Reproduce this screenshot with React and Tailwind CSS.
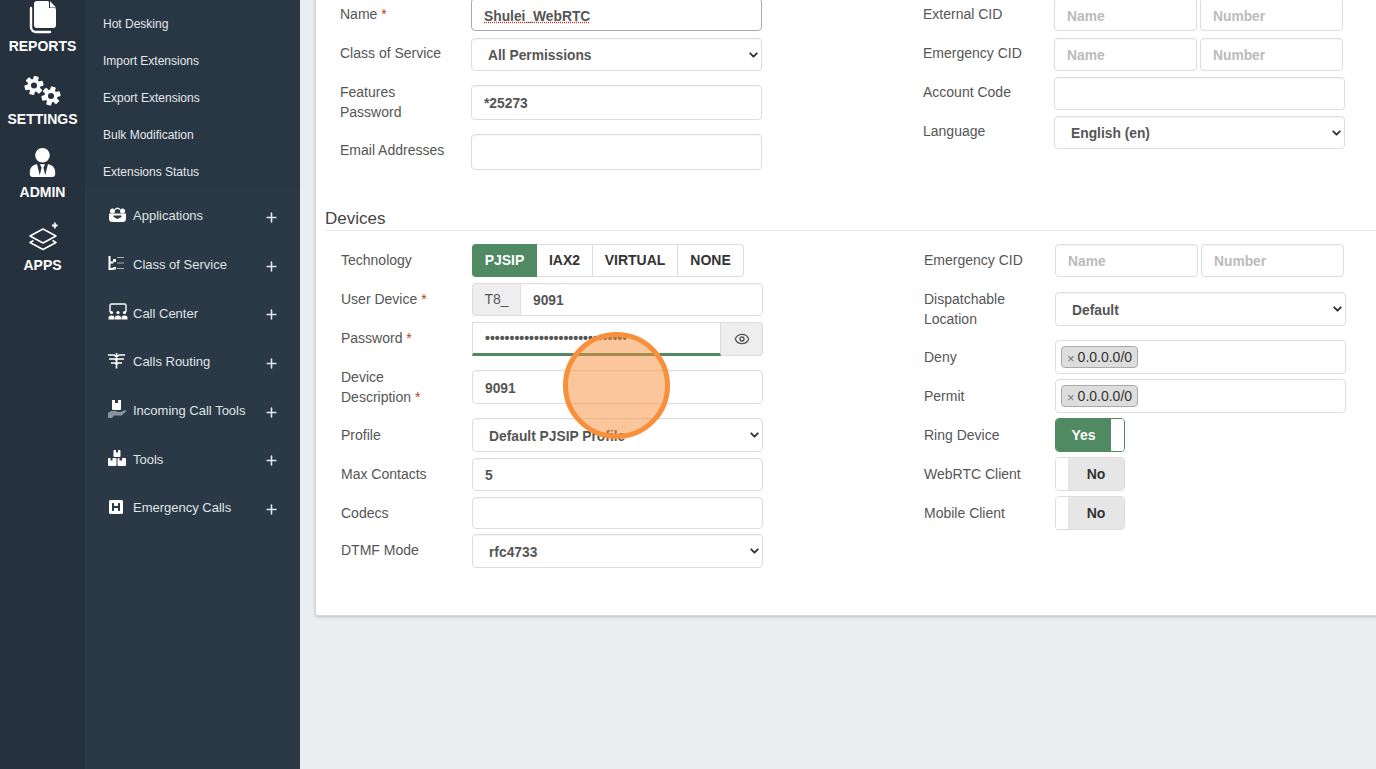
import { FaUserTie, FaHSquare } from "react-icons/fa";
import { LuEye, LuChevronDown, LuPlus } from "react-icons/lu";

const font = { fontFamily: '"Liberation Sans", Arial, sans-serif' };

function ReportsIcon() {
    return (
        <svg width="28" height="34" viewBox="0 0 28 34" fill="none">
            <path d="M8 0h11l8 8v16a3 3 0 0 1-3 3H8a3 3 0 0 1-3-3V3a3 3 0 0 1 3-3z" fill="#fff" />
            <path d="M20 0v7h7z" fill="#25323e" />
            <path d="M21 0l6 6.500h-6z" fill="#fff" />
            <path d="M2 7v19a5 5 0 0 0 5 5h14" stroke="#fff" strokeWidth="2.400" strokeLinecap="round" />
        </svg>
    );
}

function Gear({ cx, cy, r }) {
    return (
        <g transform={`translate(${cx} ${cy})`}>
            {[0, 60, 120].map((a) => (
                <rect key={a} x={-r * 0.27} y={-r} width={r * 0.54} height={r * 2} rx="1" fill="#fff" transform={`rotate(${a + 15})`} />
            ))}
            <circle r={r * 0.68} fill="#fff" />
            <circle r={r * 0.32} fill="#25323e" />
        </g>
    );
}

function SettingsIcon() {
    return (
        <svg width="38" height="32" viewBox="0 0 38 32">
            <Gear cx="10" cy="9.500" r="9.500" />
            <Gear cx="27" cy="20" r="9.500" />
        </svg>
    );
}

function AppsIcon() {
    return (
        <svg width="30" height="30" viewBox="0 0 30 30" fill="none" stroke="#fff" strokeWidth="1.500" strokeLinejoin="round" className="mb-[3px]">
            <path d="M15 8L28 15 15 22 2 15z" />
            <path d="M5.500 19.500L2 21.500 15 28.500 28 21.500 24.500 19.500" />
            <path d="M24 4.500h5.500M26.800 1.500v6" strokeWidth="1.800" />
        </svg>
    );
}

function ApplicationsIcon() {
    return (
        <svg width="19" height="16" viewBox="0 0 19 16" fill="#fff">
            <path d="M1 6.500h17v5a3.500 3.500 0 0 1-3.500 3.500h-10A3.500 3.500 0 0 1 1 11.500z" />
            <path d="M5.500 8.500h8v1.500l-4 2-4-2z" fill="#2b3845" />
            <circle cx="4.500" cy="4" r="2.500" />
            <circle cx="14.500" cy="4" r="2.500" />
            <path d="M7 2.500c1.500-1.500 3.500-1.500 5 0" fill="none" stroke="#fff" strokeWidth="1.400" />
        </svg>
    );
}

function ServiceIcon() {
    return (
        <svg width="17" height="15" viewBox="0 0 17 15" fill="none" stroke="#fff">
            <path d="M1.500 0v13h4M1.500 6.500h4" strokeWidth="2" />
            <path d="M5 3h3v3H5zM5 11h3v2.500H5z" fill="#fff" stroke="none" />
            <path d="M9 1.500h7M9 7h7M9 12.500h7" strokeWidth="1.200" opacity=".6" />
        </svg>
    );
}

function CallCenterIcon() {
    return (
        <svg width="20" height="17" viewBox="0 0 20 17" fill="#fff">
            <path d="M2 9V2.500A1.500 1.500 0 0 1 3.500 1h13A1.500 1.500 0 0 1 18 2.500V9" fill="none" stroke="#fff" strokeWidth="1.400" />
            {[3.500, 10, 16.500].map((x) => (
                <g key={x}>
                    <circle cx={x} cy="9.500" r="1.600" />
                    <path d={`M${x - 3} 16.500v-1.500a2.500 2.500 0 0 1 2.500-2.500h1a2.500 2.500 0 0 1 2.500 2.500v1.500z`} />
                </g>
            ))}
        </svg>
    );
}

function RoutingIcon() {
    return (
        <svg width="17" height="16" viewBox="0 0 17 16" fill="none" stroke="#fff" strokeWidth="1.600">
            <path d="M8.500 0v15.500M0 2h6l2.500 2 2.500-2h6M1 6h6l1.500 1.500L10 6h6M3 10h4l1.500 1.500L10 10h4" />
        </svg>
    );
}

function IncomingIcon() {
    return (
        <svg width="19" height="18" viewBox="0 0 19 18">
            <path d="M4 0h3v3h3V0h3v9a1 1 0 0 1-1 1H5a1 1 0 0 1-1-1z" fill="#fff" />
            <path d="M0 13l3-2h5l2 1h3l4-2 1.500 1-5 4.500H6l-2 2.500H0z" fill="#8b949c" />
        </svg>
    );
}

function ToolsIcon() {
    return (
        <svg width="18" height="16" viewBox="0 0 18 16" fill="#fff">
            <path d="M5.500 1a1 1 0 0 1 1-1H8v2.500h2V0h1.500a1 1 0 0 1 1 1v5a1 1 0 0 1-1 1h-5a1 1 0 0 1-1-1z" />
            <path d="M0 9a1 1 0 0 1 1-1h1.500v2.500h2V8H7.500a1 1 0 0 1 1 1v6a1 1 0 0 1-1 1H1a1 1 0 0 1-1-1z" />
            <path d="M9.500 9a1 1 0 0 1 1-1h1v2.500h2.500V8h3a1 1 0 0 1 1 1v6a1 1 0 0 1-1 1h-6.500a1 1 0 0 1-1-1z" />
        </svg>
    );
}

const rail = [
    { label: "REPORTS", icon: <ReportsIcon /> },
    { label: "SETTINGS", icon: <SettingsIcon /> },
    { label: "ADMIN", icon: <FaUserTie className="text-[29px] text-white mb-[4px]" /> },
    { label: "APPS", icon: <AppsIcon /> },
];

const subLinks = ["Hot Desking", "Import Extensions", "Export Extensions", "Bulk Modification", "Extensions Status"];

const menu = [
    { label: "Applications", icon: <ApplicationsIcon /> },
    { label: "Class of Service", icon: <ServiceIcon /> },
    { label: "Call Center", icon: <CallCenterIcon /> },
    { label: "Calls Routing", icon: <RoutingIcon /> },
    { label: "Incoming Call Tools", icon: <IncomingIcon /> },
    { label: "Tools", icon: <ToolsIcon /> },
    { label: "Emergency Calls", icon: <FaHSquare className="text-[16px] text-white" /> },
];

function Sidebar() {
    return (
        <div className="flex h-full shrink-0">
            <div className="w-[85px] bg-[#25323e] -mt-[17px] h-[800px]">
                {rail.map((item) => (
                    <div key={item.label} className="h-[73px] flex flex-col items-center">
                        <div className="h-[53px] flex items-end justify-center pb-[1px]">{item.icon}</div>
                        <div className="text-[14px] leading-5 font-bold text-white">{item.label}</div>
                    </div>
                ))}
            </div>
            <div className="w-[215px] bg-[#2b3845]">
                <div className="bg-[#293643] pt-[5px] pl-[18px] h-[190.300px]">
                    {subLinks.map((s) => (
                        <div key={s} className="h-[37px] flex items-center text-[12px] text-[#e4e8ec]">{s}</div>
                    ))}
                </div>
                {menu.map((m) => (
                    <div key={m.label} className="h-[48.670px] flex items-center text-[13px] text-[#dfe4e8]">
                        <div className="w-[48px] pl-[23px] flex shrink-0">{m.icon}</div>
                        <div className="w-[131px] pt-[3px]">{m.label}</div>
                        <LuPlus className="text-[15px] text-[#e4e8ec] mt-[6px]" strokeWidth={2.500} />
                    </div>
                ))}
            </div>
        </div>
    );
}

function Row({ label, req, className = "", lift = "pb-[1px]", children }) {
    return (
        <div className={`flex items-center ${className}`}>
            <div className={`w-[131px] pr-[20px] text-[14px] leading-5 text-[#555] ${lift}`}>
                {label}
                {req && <span className="text-[#c0392b]"> *</span>}
            </div>
            <div className="w-[291px] h-full flex">{children}</div>
        </div>
    );
}

const box = "w-full h-full border border-[#ddd] rounded-[4px] bg-white px-[12px] pt-[2px] text-[13.800px] font-bold text-[#555] outline-none placeholder:text-[#bbb] shadow-[inset_0_1px_1px_rgba(0,0,0,0.04)]";

function Input({ value = "", className = "" }) {
    return <input readOnly value={value} className={`${box} ${className}`} />;
}

function Select({ value }) {
    return (
        <div className="relative w-full h-full">
            <select value={value} onChange={() => {}} className={`${box} pl-[16px] pt-[4px]! appearance-none`}>
                <option>{value}</option>
            </select>
            <LuChevronDown className="absolute right-[2px] top-1/2 -translate-y-1/2 text-[13px] text-[#333]" strokeWidth={3.500} />
        </div>
    );
}

function Pair({ className = "" }) {
    return (
        <div className="flex w-[289px] h-full gap-[3px]">
            <input readOnly placeholder="Name" className={`${box} ${className}`} />
            <input readOnly placeholder="Number" className={`${box} ${className}`} />
        </div>
    );
}

function Tag() {
    return (
        <div className="w-full h-full border border-[#ddd] rounded-[4px] bg-white flex items-center pl-[5px]">
            <div className="h-[22px] flex items-center gap-[3px] px-[5px] bg-[#ddd] border border-[#aaa] rounded-[4px] text-[14px] text-[#333]">
                <span className="text-[#777] text-[13px] leading-none mt-[2px]">×</span>0.0.0.0/0
            </div>
        </div>
    );
}

function Toggle({ on }) {
    if (on) {
        return (
            <div className="w-[70px] h-full flex rounded-[4px] border border-[#4f8a63] overflow-hidden">
                <div className="flex-1 bg-[#4f8a63] text-white text-[14px] font-bold flex items-center justify-center">Yes</div>
                <div className="w-[13px] bg-white" />
            </div>
        );
    }
    return (
        <div className="w-[70px] h-full flex rounded-[4px] border border-[#ddd] overflow-hidden">
            <div className="w-[12px] bg-white" />
            <div className="flex-1 bg-[#e6e6e6] text-[#333] text-[14px] font-bold flex items-center justify-center">No</div>
        </div>
    );
}

function Tech() {
    const items = [
        { t: "PJSIP", w: "w-[65px]" },
        { t: "IAX2", w: "w-[56px]" },
        { t: "VIRTUAL", w: "w-[85px]" },
        { t: "NONE", w: "w-[66px]" },
    ];
    return (
        <div className="flex h-full">
            {items.map((it, i) => (
                <div
                    key={it.t}
                    className={`${it.w} flex items-center justify-center text-[14px] font-bold ${
                        i === 0
                            ? "bg-[#4f8a63] text-white rounded-l-[4px]"
                            : `bg-white text-[#333] border-y border-r border-[#ddd] ${i === 3 ? "rounded-r-[4px]" : ""}`
                    }`}
                >
                    {it.t}
                </div>
            ))}
        </div>
    );
}

function Card() {
    return (
        <div className="bg-white -mt-[10px] pt-[8px] w-[1100px] rounded-bl-[3px] border-l border-b border-[#d5d9dc] shadow-[0_1px_3px_rgba(0,0,0,0.2)]">
            {/* general */}
            <div className="flex pl-[24px]">
                <div className="w-[422px] flex flex-col">
                    <Row label="Name" req className="h-[33px]">
                        <Input value="Shulei_WebRTC" className="pt-[4px]! border-[#aaa]! underline decoration-dotted decoration-[#c0392b]" />
                    </Row>
                    <Row label="Class of Service" lift="pb-[3px]" className="h-[33px] mt-[7px]"><Select value="All Permissions" /></Row>
                    <Row label="Features Password" className="h-[35px] mt-[14px]"><Input value="*25273" /></Row>
                    <Row label="Email Addresses" lift="pb-[5px]" className="h-[36px] mt-[14px]"><Input /></Row>
                </div>
                <div className="w-[422px] ml-[161px] flex flex-col">
                    <Row label="External CID" className="h-[33px]"><Pair className="pt-[4px]!" /></Row>
                    <Row label="Emergency CID" lift="pb-[3px]" className="h-[33px] mt-[7px]"><Pair /></Row>
                    <Row label="Account Code" lift="pb-[3px]" className="h-[33px] mt-[6px]"><Input /></Row>
                    <Row label="Language" lift="pb-[3px]" className="h-[33px] mt-[6px]"><Select value="English (en)" /></Row>
                </div>
            </div>

            <div className="ml-[9px] mt-[36px] h-[25px] border-b border-[#e8e8e8] text-[17px] leading-[25px] text-[#444]">Devices</div>

            {/* devices */}
            <div className="flex pl-[25px] mt-[13px] pb-[47px]">
                <div className="w-[422px] flex flex-col">
                    <Row label="Technology" className="h-[33px]"><Tech /></Row>
                    <Row label="User Device" req className="h-[33px] mt-[6px]">
                        <div className="w-[48px] h-full shrink-0 flex items-center justify-center bg-[#eee] border border-r-0 border-[#ddd] rounded-l-[4px] text-[14px] text-[#555]">T8_</div>
                        <Input value="9091" className="rounded-l-none!" />
                    </Row>
                    <Row label="Password" req lift="pb-[3px]" className="h-[34px] mt-[6px]">
                        <input
                            readOnly
                            type="password"
                            value={"x".repeat(29)}
                            className="w-[249px] h-full border border-[#ddd] border-b-[3px] border-b-[#4f8a63] bg-white px-[12px] text-[14px] font-bold text-[#555] outline-none"
                        />
                        <div className="flex-1 flex items-center justify-center bg-[#eee] border border-l-0 border-[#ddd] rounded-r-[4px]">
                            <LuEye className="text-[16px] text-[#555]" />
                        </div>
                    </Row>
                    <Row label="Device Description" req className="h-[34px] mt-[14px]"><Input value="9091" /></Row>
                    <Row label="Profile" className="h-[34px] mt-[14px]"><Select value="Default PJSIP Profile" /></Row>
                    <Row label="Max Contacts" className="h-[33px] mt-[6px]"><Input value="5" /></Row>
                    <Row label="Codecs" className="h-[32px] mt-[6px]"><Input /></Row>
                    <Row label="DTMF Mode" lift="pb-[3px]" className="h-[34px] mt-[5px]"><Select value="rfc4733" /></Row>
                </div>
                <div className="w-[422px] ml-[161px] flex flex-col">
                    <Row label="Emergency CID" className="h-[33px]"><Pair /></Row>
                    <Row label="Dispatchable Location" className="h-[34px] mt-[15px]"><Select value="Default" /></Row>
                    <Row label="Deny" className="h-[34px] mt-[14px]"><Tag /></Row>
                    <Row label="Permit" className="h-[34px] mt-[5px]"><Tag /></Row>
                    <Row label="Ring Device" className="h-[34px] mt-[5px]"><Toggle on /></Row>
                    <Row label="WebRTC Client" className="h-[34px] mt-[5px]"><Toggle /></Row>
                    <Row label="Mobile Client" className="h-[34px] mt-[5px]"><Toggle /></Row>
                </div>
            </div>
        </div>
    );
}

export default function App() {
    return (
        <div style={font} className="relative flex h-[769px] w-[1376px] overflow-hidden bg-[#ebeef1]">
            <Sidebar />
            <div className="flex-1 pl-[15px] overflow-hidden">
                <Card />
            </div>
            {/* click marker */}
            <div className="absolute left-[563px] top-[332px] w-[107px] h-[107px] rounded-full border-[5px] border-[#f78f3b] bg-[#f98d3a]/50" />
        </div>
    );
}
